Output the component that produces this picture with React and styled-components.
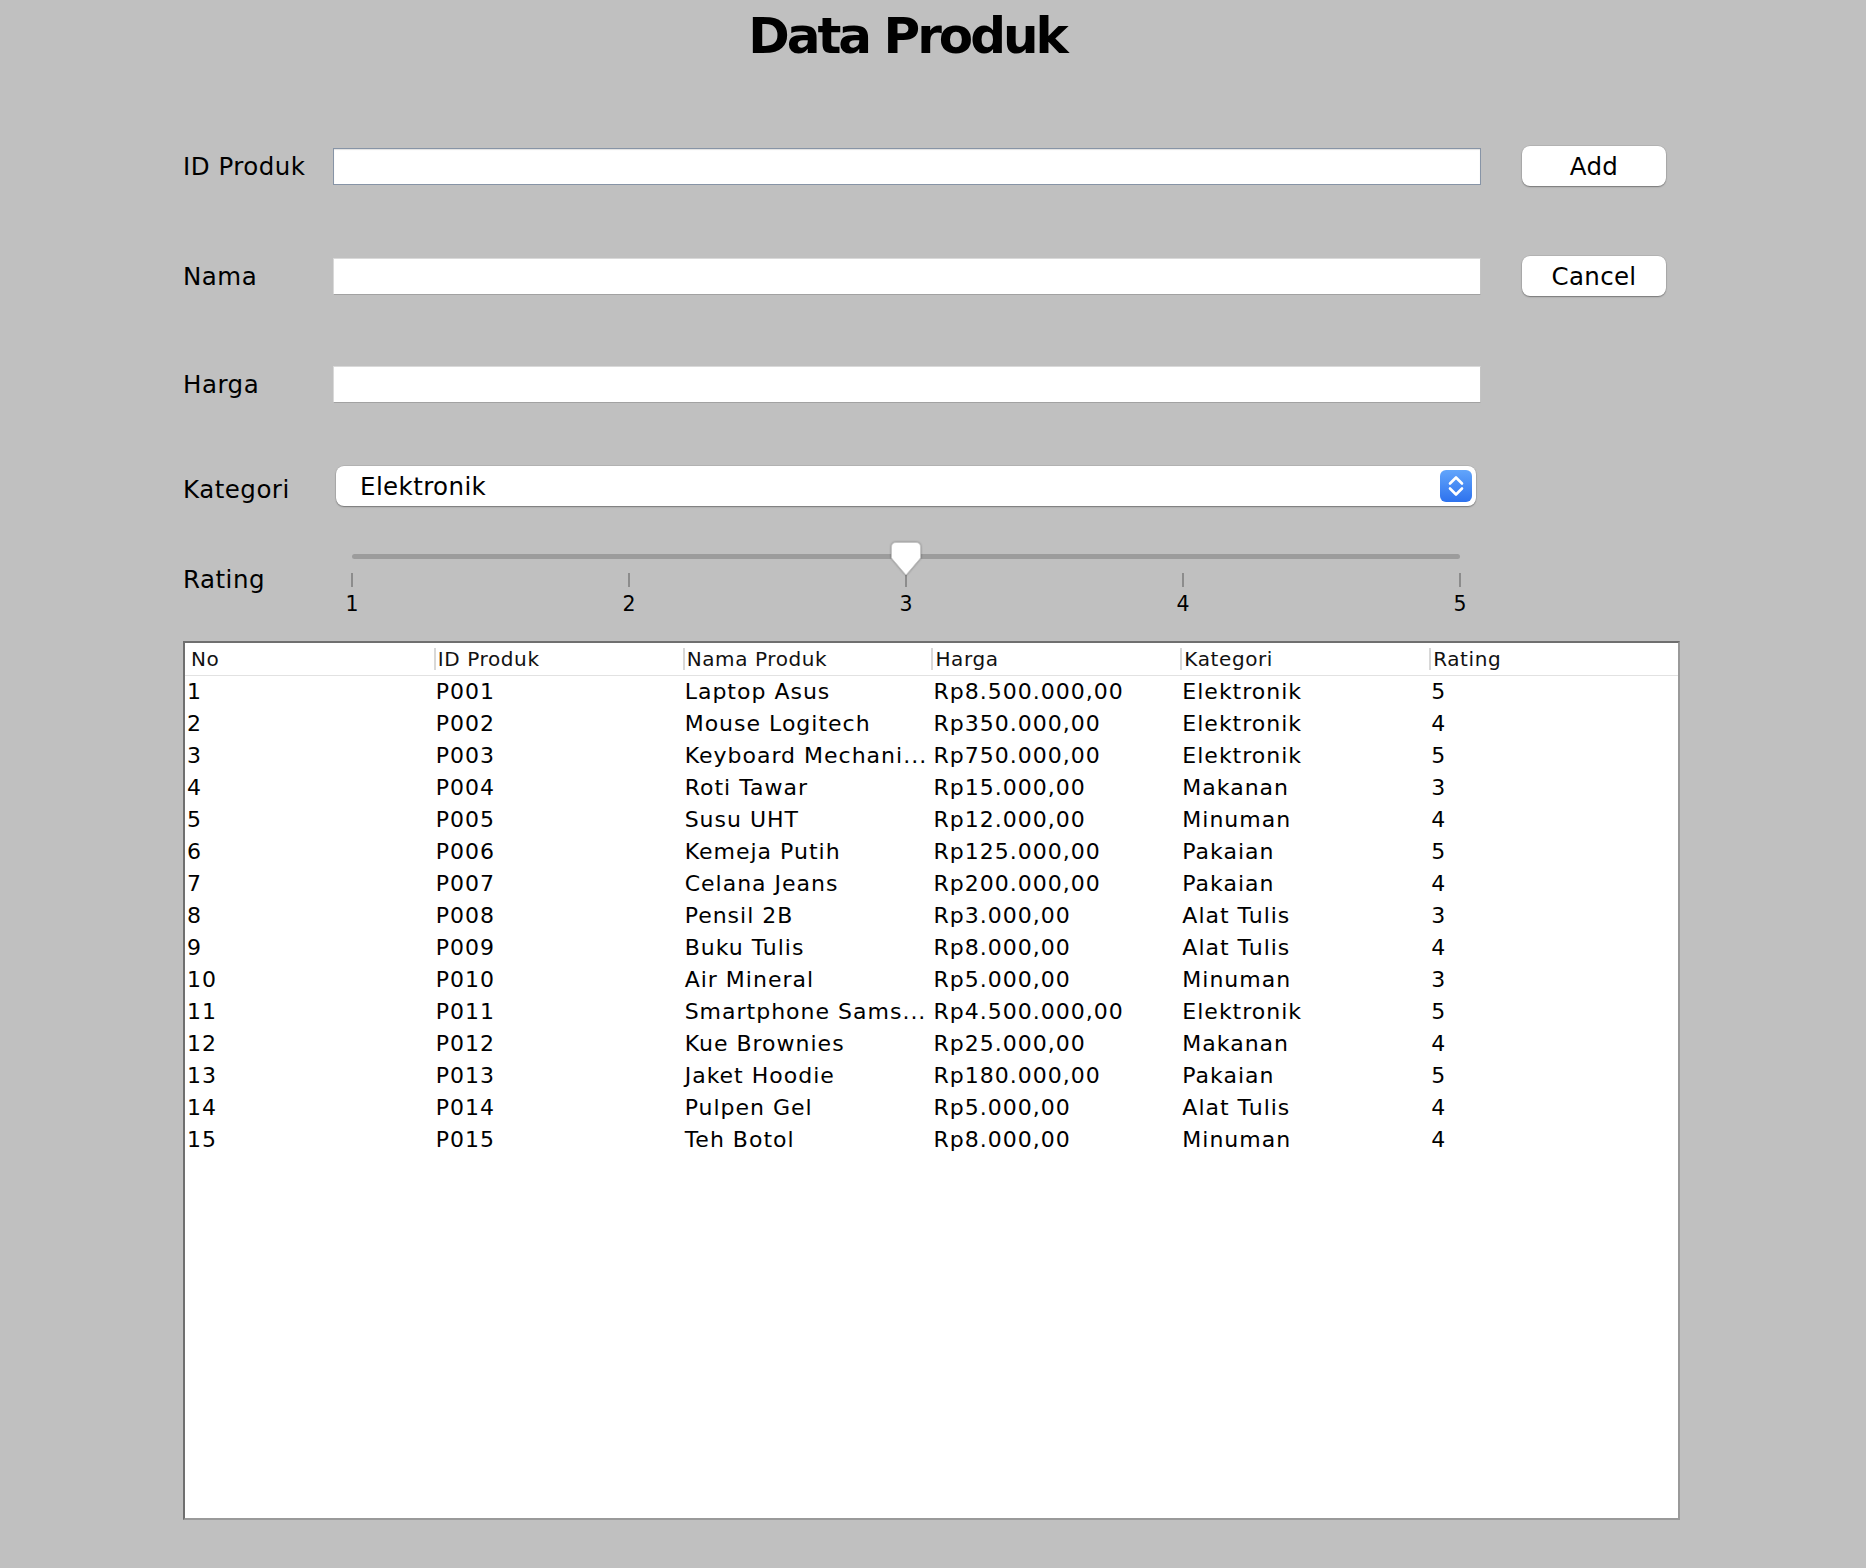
import React from 'react';
import styled, { createGlobalStyle, css } from 'styled-components';

const GlobalStyle = createGlobalStyle`
  html, body { margin: 0; padding: 0; background: #c0c0c0; }
  body { font-family: "DejaVu Sans", "Lucida Grande", sans-serif; color: #000; }
`;

const Page = styled.div`
  width: 1866px;
  min-height: 1568px;
  background: #c0c0c0;
`;

const Title = styled.h1`
  margin: 0;
  padding: 7px 52px 0 0;
  height: 58px;
  line-height: 58px;
  text-align: center;
  font-size: 50px;
  font-weight: bold;
  letter-spacing: -3px;
  color: #000;
`;

const Content = styled.div`
  padding-left: 183px;
`;

const FormRow = styled.div`
  display: grid;
  grid-template-columns: 150px 1148px 185px;
  align-items: center;
  height: 40px;
  margin-top: ${p => p.$gap}px;
`;

const RatingRow = styled(FormRow)`
  align-items: start;
  height: auto;
`;

const Label = styled.div`
  font-size: 24.5px;
  letter-spacing: 0.5px;
  white-space: nowrap;
  ${p => p.$offset && css`margin-top: ${p.$offset}px;`}
`;

const TextField = styled.input`
  display: block;
  box-sizing: border-box;
  width: 100%;
  height: 37px;
  margin: 0;
  padding: 0 6px;
  background: #fff;
  font-family: "DejaVu Sans", sans-serif;
  font-size: 22px;
  outline: none;
  border: 1px solid;
  border-color: #d9d9d9 #c4c4c4 #a2a2a2 #d9d9d9;
  ${p => p.$focused && css`
    border: 1px solid #8794a6;
    box-shadow: inset 0 1px 1px rgba(0, 0, 0, 0.12);
  `}
`;

const Button = styled.button`
  justify-self: end;
  width: 144px;
  height: 40px;
  border: none;
  border-radius: 8px;
  background: #fff;
  box-shadow: 0 1px 1.5px rgba(0, 0, 0, 0.35), 0 0 0 0.5px rgba(0, 0, 0, 0.12);
  font-family: "DejaVu Sans", sans-serif;
  font-size: 24.5px;
  letter-spacing: 0.3px;
  color: #000;
  padding: 0;
`;

const Combo = styled.div`
  display: flex;
  align-items: center;
  justify-content: space-between;
  height: 40px;
  margin: 0 5px 0 3px;
  padding: 0 4px 0 24px;
  box-sizing: border-box;
  background: #fff;
  border-radius: 8px;
  box-shadow: 0 1px 1.5px rgba(0, 0, 0, 0.35), 0 0 0 0.5px rgba(0, 0, 0, 0.12);
  font-size: 24.5px;
  letter-spacing: 0.4px;
`;

const ComboArrow = styled.div`
  width: 32px;
  height: 32px;
  border-radius: 6px;
  background: linear-gradient(#62a5fb, #2d72ee);
  display: flex;
  align-items: center;
  justify-content: center;
`;

const SliderBox = styled.div`
  position: relative;
  height: 76px;
  margin: 0 5px 0 3px;
`;

const Track = styled.div`
  margin: 14px 16px 0;
  height: 5px;
  border-radius: 3px;
  background: #9c9c9c;
`;

const Thumb = styled.svg`
  position: absolute;
  top: 2px;
  left: calc(16px + (100% - 32px) * ${p => p.$pct});
  transform: translateX(-50%);
  filter: drop-shadow(0 0.5px 1px rgba(0, 0, 0, 0.35));
`;

const TickRow = styled.div`
  display: flex;
  justify-content: space-between;
  margin: 14px 16px 0;
`;

const Tick = styled.div`
  width: 0;
  display: flex;
  flex-direction: column;
  align-items: center;
`;

const TickMark = styled.div`
  flex-shrink: 0;
  width: 2px;
  height: 14px;
  background: #8c8c8c;
`;

const TickLabel = styled.div`
  margin-top: 5px;
  font-size: 20.5px;
`;

const TableFrame = styled.div`
  margin-top: 25px;
  width: 1497px;
  height: 879px;
  box-sizing: border-box;
  border: 2px solid;
  border-color: #6f6f6f #9a9a9a #9a9a9a #6f6f6f;
  background: #fff;
`;

const HeaderRow = styled.div`
  display: grid;
  grid-template-columns: repeat(6, 1fr);
  align-items: center;
  height: 32px;
  border-bottom: 1px solid #e2e2e2;
`;

const HeaderCell = styled.div`
  display: flex;
  align-items: center;
  height: 22px;
  font-size: 20px;
  letter-spacing: 0.6px;
  color: #111;
  white-space: nowrap;
  padding-left: ${p => (p.$first ? 6 : 2)}px;
  border-left: ${p => (p.$first ? 'none' : '2px solid #d8d8d8')};
`;

const BodyRow = styled.div`
  display: grid;
  grid-template-columns: repeat(6, 1fr);
  height: 32px;
`;

const Cell = styled.div`
  font-size: 22px;
  letter-spacing: 1px;
  line-height: 32px;
  padding-left: 2px;
  white-space: nowrap;
  overflow: hidden;
`;

const headers = ['No', 'ID Produk', 'Nama Produk', 'Harga', 'Kategori', 'Rating'];

const rows = [
  ['1', 'P001', 'Laptop Asus', 'Rp8.500.000,00', 'Elektronik', '5'],
  ['2', 'P002', 'Mouse Logitech', 'Rp350.000,00', 'Elektronik', '4'],
  ['3', 'P003', 'Keyboard Mechani...', 'Rp750.000,00', 'Elektronik', '5'],
  ['4', 'P004', 'Roti Tawar', 'Rp15.000,00', 'Makanan', '3'],
  ['5', 'P005', 'Susu UHT', 'Rp12.000,00', 'Minuman', '4'],
  ['6', 'P006', 'Kemeja Putih', 'Rp125.000,00', 'Pakaian', '5'],
  ['7', 'P007', 'Celana Jeans', 'Rp200.000,00', 'Pakaian', '4'],
  ['8', 'P008', 'Pensil 2B', 'Rp3.000,00', 'Alat Tulis', '3'],
  ['9', 'P009', 'Buku Tulis', 'Rp8.000,00', 'Alat Tulis', '4'],
  ['10', 'P010', 'Air Mineral', 'Rp5.000,00', 'Minuman', '3'],
  ['11', 'P011', 'Smartphone Sams...', 'Rp4.500.000,00', 'Elektronik', '5'],
  ['12', 'P012', 'Kue Brownies', 'Rp25.000,00', 'Makanan', '4'],
  ['13', 'P013', 'Jaket Hoodie', 'Rp180.000,00', 'Pakaian', '5'],
  ['14', 'P014', 'Pulpen Gel', 'Rp5.000,00', 'Alat Tulis', '4'],
  ['15', 'P015', 'Teh Botol', 'Rp8.000,00', 'Minuman', '4'],
];

const ratingValue = 3;

export default function App() {
  return (
    <Page>
      <GlobalStyle />
      <Title>Data Produk</Title>
      <Content>
        <FormRow $gap={81}>
          <Label>ID Produk</Label>
          <TextField $focused readOnly />
          <Button>Add</Button>
        </FormRow>
        <FormRow $gap={70}>
          <Label>Nama</Label>
          <TextField readOnly />
          <Button>Cancel</Button>
        </FormRow>
        <FormRow $gap={68}>
          <Label>Harga</Label>
          <TextField readOnly />
        </FormRow>
        <FormRow $gap={62}>
          <Label $offset={6}>Kategori</Label>
          <Combo>
            <span>Elektronik</span>
            <ComboArrow>
              <svg width="32" height="32" viewBox="0 0 32 32" fill="none">
                <path d="M10 13.5 L16 7.5 L22 13.5" stroke="#fff" strokeWidth="2.6" strokeLinecap="round" strokeLinejoin="round" />
                <path d="M10 18.5 L16 24.5 L22 18.5" stroke="#fff" strokeWidth="2.6" strokeLinecap="round" strokeLinejoin="round" />
              </svg>
            </ComboArrow>
          </Combo>
        </FormRow>
        <RatingRow $gap={34}>
          <Label $offset={25}>Rating</Label>
          <SliderBox>
            <Track />
            <Thumb $pct={(ratingValue - 1) / 4} width="30" height="34" viewBox="0 0 30 34">
              <path d="M5 0.5 H25 Q29.5 0.5 29.5 5 V16 L15 33 L0.5 16 V5 Q0.5 0.5 5 0.5 Z" fill="#fff" stroke="#c4c4c4" strokeWidth="0.8" />
            </Thumb>
            <TickRow>
              {[1, 2, 3, 4, 5].map(n => (
                <Tick key={n}>
                  <TickMark />
                  <TickLabel>{n}</TickLabel>
                </Tick>
              ))}
            </TickRow>
          </SliderBox>
        </RatingRow>
        <TableFrame>
          <HeaderRow>
            {headers.map((h, i) => (
              <HeaderCell key={h} $first={i === 0}>{h}</HeaderCell>
            ))}
          </HeaderRow>
          {rows.map(r => (
            <BodyRow key={r[0]}>
              {r.map((c, i) => (
                <Cell key={i}>{c}</Cell>
              ))}
            </BodyRow>
          ))}
        </TableFrame>
      </Content>
    </Page>
  );
}
